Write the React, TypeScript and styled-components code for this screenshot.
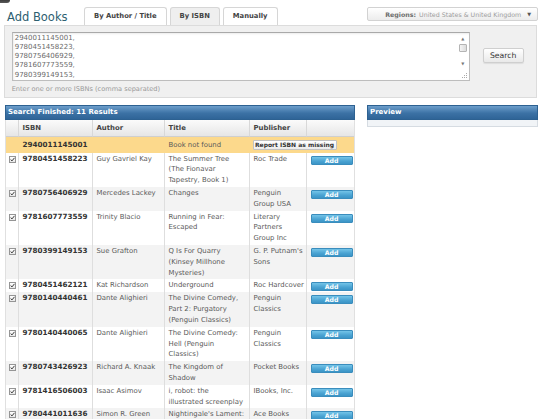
import React from "react";
import styled, { createGlobalStyle, css } from "styled-components";

const GlobalStyle = createGlobalStyle`
	html, body {
		margin: 0;
		padding: 0;
		background: #fff;
	}
	body {
		font-family: "DejaVu Sans", Verdana, sans-serif;
		color: #555;
	}
	* {
		box-sizing: border-box;
	}
`;

const Page = styled.div`
	width: 540px;
	height: 419px;
	overflow: hidden;
	padding: 0 2px 0 4px;
`;

const Stub = styled.div`
	width: 10px;
	height: 3px;
	margin-left: -4px;
	background: linear-gradient(#3c3c3c, #5a5a5a);
	border-bottom-right-radius: 3px;
`;

const TopBar = styled.div`
	display: flex;
	align-items: flex-end;
	height: 22px;
`;

const Title = styled.h1`
	flex: 0 0 77px;
	margin: 0 0 1px 3px;
	font-size: 11.5px;
	line-height: 14px;
	font-weight: normal;
	color: #2d6070;
	white-space: nowrap;
`;

const Tabs = styled.div`
	display: flex;
	gap: 3px;
`;

const Tab = styled.button<{ $active?: boolean }>`
	height: 18px;
	padding: 0 9px;
	border: 1px solid #d6d6d6;
	border-bottom: none;
	border-radius: 3px 3px 0 0;
	background: ${({ $active }) => ($active ? "#efefef" : "#fff")};
	font-family: inherit;
	font-size: 6.8px;
	font-weight: bold;
	line-height: 17px;
	color: #444;
	cursor: pointer;
`;

const Regions = styled.div`
	align-self: flex-start;
	margin: 4px 0 0 auto;
	width: 171px;
	height: 14px;
	display: flex;
	align-items: center;
	justify-content: flex-end;
	padding-right: 6px;
	border: 1px solid #d2d2d2;
	border-radius: 2px;
	background: linear-gradient(#fff, #ececec);
	font-size: 6.3px;
	color: #9c9c9c;
	white-space: nowrap;
`;

const RegionsLabel = styled.b`
	color: #6e6e6e;
	margin-right: 3px;
`;

const Caret = styled.span`
	margin-left: 6px;
	font-size: 5px;
	color: #555;
`;

const SearchPanel = styled.div`
	display: flex;
	align-items: flex-start;
	height: 73px;
	margin-right: 1px;
	padding: 5.7px 12px 0 6.7px;
	border: 1px solid #dcdcdc;
	background: #f0f0f0;
`;

const InputColumn = styled.div`
	display: flex;
	flex-direction: column;
	width: 458px;
`;

const TextBox = styled.div`
	display: flex;
	height: 49px;
	border: 1px solid #bdbdbd;
	border-top-color: #a9a9a9;
	background: #fff;
	box-shadow: inset 1px 1px 2px rgba(0, 0, 0, 0.08);
`;

const IsbnInput = styled.textarea`
	flex: 1;
	border: none;
	outline: none;
	resize: none;
	overflow: hidden;
	padding: 1px 2px;
	background: transparent;
	font-family: "DejaVu Sans", Verdana, sans-serif;
	font-size: 7px;
	line-height: 9.2px;
	color: #6a6a6a;
`;

const ScrollCol = styled.div`
	width: 12px;
	display: flex;
	flex-direction: column;
	align-items: center;
	padding: 4px 0 1px;
`;

const Arrow = styled.span<{ $gap?: number }>`
	font-size: 4px;
	line-height: 4px;
	height: 4px;
	color: #777;
	margin-top: ${({ $gap = 0 }) => $gap}px;
`;

const Thumb = styled.div`
	width: 8px;
	height: 8px;
	margin-top: 3px;
	border: 1px solid #b4b4b4;
	border-radius: 1px;
	background: linear-gradient(90deg, #f4f4f4, #dcdcdc);
`;

const Grip = styled.svg`
	margin-top: auto;
	align-self: flex-end;
	margin-right: 1px;
`;

const Help = styled.div`
	margin-top: 4px;
	font-size: 6.6px;
	line-height: 9px;
	color: #9a9a9a;
`;

const SearchButton = styled.button`
	width: 41px;
	height: 15px;
	margin: 16px 0 0 13px;
	padding: 0;
	border: 1px solid #cfcfcf;
	border-radius: 2px;
	background: linear-gradient(#fff, #e9e9e9);
	box-shadow: 0 1px 1px rgba(0, 0, 0, 0.08);
	font-family: inherit;
	font-size: 7.7px;
	color: #333;
	cursor: pointer;
`;

const Columns = styled.div`
	display: flex;
	gap: 12px;
	margin-top: 7px;
`;

const Results = styled.section`
	width: 350px;
	margin-left: 1px;
`;

const Preview = styled.section`
	width: 171px;
`;

const PanelHead = styled.div`
	height: 15px;
	padding-left: 2px;
	border: 1px solid #2d6191;
	background: linear-gradient(#6d9ecb, #3c72a5 55%, #2f6497);
	font-size: 7px;
	font-weight: bold;
	line-height: 13px;
	color: #fff;
	white-space: nowrap;
`;

const PreviewBody = styled.div`
	height: 7px;
	border: 1px solid #d6dce2;
	border-top: none;
	background: #f1f4f7;
`;

const Table = styled.table`
	width: 350px;
	table-layout: fixed;
	border-collapse: separate;
	border-spacing: 0;
	border-left: 1px solid #e0e0e0;
	border-right: 1px solid #e0e0e0;
	font-size: 6.9px;
	line-height: 10.8px;
	color: #5a5a5a;
`;

const HeadCell = styled.th`
	height: 17px;
	padding: 0 3.5px;
	text-align: left;
	font-weight: bold;
	color: #444;
	background: linear-gradient(#fbfbfb, #e6e6e6);
	border-bottom: 1px solid #cfcfcf;
	border-right: 1px solid #d8d8d8;
	&:last-child {
		border-right: none;
	}
`;

const Row = styled.tr<{ $tone: "missing" | "odd" | "even" }>`
	background: ${({ $tone }) =>
		$tone === "missing" ? "#fcd98c" : $tone === "odd" ? "#f3f3f3" : "#fff"};
	& > td {
		border-right-color: ${({ $tone }) => ($tone === "missing" ? "#fcd98c" : "#dedede")};
		${({ $tone }) =>
			$tone === "missing" &&
			css`
				padding-top: 2.5px;
				padding-bottom: 2.4px;
			`}
	}
`;

const Cell = styled.td<{ $center?: boolean }>`
	padding: 1px 3.5px;
	vertical-align: top;
	white-space: nowrap;
	border-right: 1px solid #dedede;
	text-align: ${({ $center }) => ($center ? "center" : "left")};
	&:last-child {
		border-right: none;
	}
`;

const Isbn = styled.span`
	font-size: 7.2px;
	font-weight: bold;
	color: #333;
`;

const Line = styled.div``;

const Check = styled.span`
	display: block;
	width: 7px;
	height: 7px;
	margin: 2px 0 0 -1px;
	border: 1px solid #959595;
	background: linear-gradient(#fff, #e8e8e8);
	svg {
		display: block;
	}
`;

const AddButton = styled.button`
	display: block;
	width: 42px;
	height: 9px;
	margin: 2px auto 0;
	padding: 0;
	border: 1px solid #3a8dbd;
	border-radius: 1px;
	background: linear-gradient(#74c4e8, #4aa3d2 60%, #3b94c6);
	font-family: inherit;
	font-size: 6.2px;
	font-weight: bold;
	line-height: 7px;
	color: #fff;
	cursor: pointer;
`;

const ReportButton = styled.button`
	display: block;
	width: 84px;
	height: 10px;
	margin: 0 0 0 -1px;
	padding: 0;
	border: 1px solid #c2c2c2;
	border-radius: 1px;
	background: linear-gradient(#fff, #ececec);
	font-family: inherit;
	font-size: 6px;
	font-weight: bold;
	line-height: 8px;
	color: #333;
	cursor: pointer;
`;

type Book = {
	isbn: string;
	author: string;
	title: string[];
	publisher: string[];
};

const books: Book[] = [
	{
		isbn: "9780451458223",
		author: "Guy Gavriel Kay",
		title: ["The Summer Tree", "(The Fionavar", "Tapestry, Book 1)"],
		publisher: ["Roc Trade"],
	},
	{
		isbn: "9780756406929",
		author: "Mercedes Lackey",
		title: ["Changes"],
		publisher: ["Penguin", "Group USA"],
	},
	{
		isbn: "9781607773559",
		author: "Trinity Blacio",
		title: ["Running in Fear:", "Escaped"],
		publisher: ["Literary", "Partners", "Group Inc"],
	},
	{
		isbn: "9780399149153",
		author: "Sue Grafton",
		title: ["Q Is For Quarry", "(Kinsey Millhone", "Mysteries)"],
		publisher: ["G. P. Putnam's", "Sons"],
	},
	{
		isbn: "9780451462121",
		author: "Kat Richardson",
		title: ["Underground"],
		publisher: ["Roc Hardcover"],
	},
	{
		isbn: "9780140440461",
		author: "Dante Alighieri",
		title: ["The Divine Comedy,", "Part 2: Purgatory", "(Penguin Classics)"],
		publisher: ["Penguin", "Classics"],
	},
	{
		isbn: "9780140440065",
		author: "Dante Alighieri",
		title: ["The Divine Comedy:", "Hell (Penguin", "Classics)"],
		publisher: ["Penguin", "Classics"],
	},
	{
		isbn: "9780743426923",
		author: "Richard A. Knaak",
		title: ["The Kingdom of", "Shadow"],
		publisher: ["Pocket Books"],
	},
	{
		isbn: "9781416506003",
		author: "Isaac Asimov",
		title: ["i, robot: the", "illustrated screenplay"],
		publisher: ["IBooks, Inc."],
	},
	{
		isbn: "9780441011636",
		author: "Simon R. Green",
		title: ["Nightingale's Lament:"],
		publisher: ["Ace Books"],
	},
];

const missingIsbn = "2940011145001";
const allIsbns = [missingIsbn, ...books.map((b) => b.isbn)];

const CheckMark = () => (
	<Check>
		<svg width="5" height="5" viewBox="0 0 5 5">
			<path d="M0.6 2.5 L2 3.9 L4.5 0.8" fill="none" stroke="#3a3a3a" strokeWidth="1" />
		</svg>
	</Check>
);

export default function App() {
	return (
		<>
			<GlobalStyle />
			<Page>
				<Stub />
				<TopBar>
					<Title>Add Books</Title>
					<Tabs>
						<Tab>By Author / Title</Tab>
						<Tab $active>By ISBN</Tab>
						<Tab>Manually</Tab>
					</Tabs>
					<Regions>
						<RegionsLabel>Regions:</RegionsLabel>
						United States &amp; United Kingdom
						<Caret>▼</Caret>
					</Regions>
				</TopBar>

				<SearchPanel>
					<InputColumn>
						<TextBox>
							<IsbnInput defaultValue={allIsbns.join(",\n") + ","} spellCheck={false} />
							<ScrollCol>
								<Arrow>▲</Arrow>
								<Thumb />
								<Arrow $gap={10.6}>▼</Arrow>
								<Grip width="6" height="6" viewBox="0 0 6 6">
									<rect x="4" y="0" width="1" height="1" fill="#aaa" />
									<rect x="2" y="2" width="1" height="1" fill="#aaa" />
									<rect x="4" y="2" width="1" height="1" fill="#aaa" />
									<rect x="0" y="4" width="1" height="1" fill="#aaa" />
									<rect x="2" y="4" width="1" height="1" fill="#aaa" />
									<rect x="4" y="4" width="1" height="1" fill="#aaa" />
								</Grip>
							</ScrollCol>
						</TextBox>
						<Help>Enter one or more ISBNs (comma separated)</Help>
					</InputColumn>
					<SearchButton>Search</SearchButton>
				</SearchPanel>

				<Columns>
					<Results>
						<PanelHead>Search Finished: 11 Results</PanelHead>
						<Table>
							<colgroup>
								<col style={{ width: 13 }} />
								<col style={{ width: 74 }} />
								<col style={{ width: 72 }} />
								<col style={{ width: 85 }} />
								<col style={{ width: 57 }} />
								<col />
							</colgroup>
							<thead>
								<tr>
									<HeadCell />
									<HeadCell>ISBN</HeadCell>
									<HeadCell>Author</HeadCell>
									<HeadCell>Title</HeadCell>
									<HeadCell>Publisher</HeadCell>
									<HeadCell />
								</tr>
							</thead>
							<tbody>
								<Row $tone="missing">
									<Cell />
									<Cell>
										<Isbn>{missingIsbn}</Isbn>
									</Cell>
									<Cell />
									<Cell>Book not found</Cell>
									<Cell colSpan={2}>
										<ReportButton>Report ISBN as missing</ReportButton>
									</Cell>
								</Row>
								{books.map((book, i) => (
									<Row key={book.isbn + i} $tone={i % 2 === 1 ? "odd" : "even"}>
										<Cell>
											<CheckMark />
										</Cell>
										<Cell>
											<Isbn>{book.isbn}</Isbn>
										</Cell>
										<Cell>{book.author}</Cell>
										<Cell>
											{book.title.map((t) => (
												<Line key={t}>{t}</Line>
											))}
										</Cell>
										<Cell>
											{book.publisher.map((p) => (
												<Line key={p}>{p}</Line>
											))}
										</Cell>
										<Cell $center>
											<AddButton>Add</AddButton>
										</Cell>
									</Row>
								))}
							</tbody>
						</Table>
					</Results>
					<Preview>
						<PanelHead>Preview</PanelHead>
						<PreviewBody />
					</Preview>
				</Columns>
			</Page>
		</>
	);
}
